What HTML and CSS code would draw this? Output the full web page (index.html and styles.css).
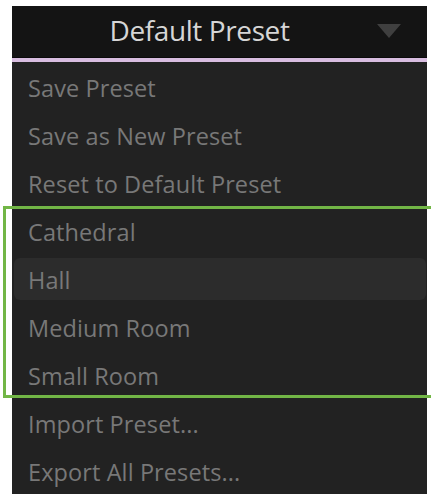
FILE: index.html
```html
<!DOCTYPE html>
<html>
<head>
<meta charset="utf-8">
<link rel="stylesheet" href="styles.css">
</head>
<body>
<div class="panel">
  <div class="header">
    <span class="title">Default Preset</span>
    <svg class="arrow" width="24" height="14" viewBox="0 0 24 14"><path d="M0 0 H24 L12 14 Z" fill="#3f3f3f"/></svg>
  </div>
  <div class="divider"></div>
  <ul class="menu">
    <li class="item">Save Preset</li>
    <li class="item">Save as New Preset</li>
    <li class="item">Reset to Default Preset</li>
    <li class="item">Cathedral</li>
    <li class="item hover">Hall</li>
    <li class="item">Medium Room</li>
    <li class="item">Small Room</li>
    <li class="item">Import Preset...</li>
    <li class="item">Export All Presets...</li>
  </ul>
</div>
<div class="highlight-box"></div>
</body>
</html>
```
FILE: styles.css
```css
html, body {
  margin: 0;
  padding: 0;
  background: #ffffff;
  overflow: hidden;
}
body {
  width: 431px;
  height: 496px;
  position: relative;
  font-family: "Open Sans", "Noto Sans", sans-serif;
}
.panel {
  margin: 6px 0 0 12px;
  width: 415px;
  height: 488px;
  background: #222222;
  display: flex;
  flex-direction: column;
}
.header {
  background: #141414;
  display: flex;
  align-items: center;
  padding-left: 10px;
  border-bottom: 1px solid #0a0a0a;
  box-sizing: border-box;
  height: 52px;
}
.title {
  flex: 1;
  text-align: center;
  color: #d6d6d6;
  font-size: 28px;
  letter-spacing: -0.4px;
  margin-top: -3px;
}
.arrow {
  margin-right: 26px;
  margin-top: -2px;
}
.divider {
  height: 4px;
  background: #d8bde0;
}
.menu {
  list-style: none;
  margin: 0;
  padding: 0;
}
.item {
  height: 48px;
  display: flex;
  align-items: center;
  padding-left: 16px;
  color: #787878;
  font-size: 23.5px;
  letter-spacing: 0.1px;
  box-sizing: border-box;
  padding-top: 4px;
}
.item.hover {
  background: #2c2c2c;
  border-radius: 6px;
  margin: 4px 1px 2px 2px;
  height: 42px;
  padding-left: 14px;
  padding-top: 2px;
}
.highlight-box {
  position: absolute;
  left: 3px;
  right: -6px;
  top: 206px;
  height: 186px;
  border: 3px solid #72b646;
}
```
